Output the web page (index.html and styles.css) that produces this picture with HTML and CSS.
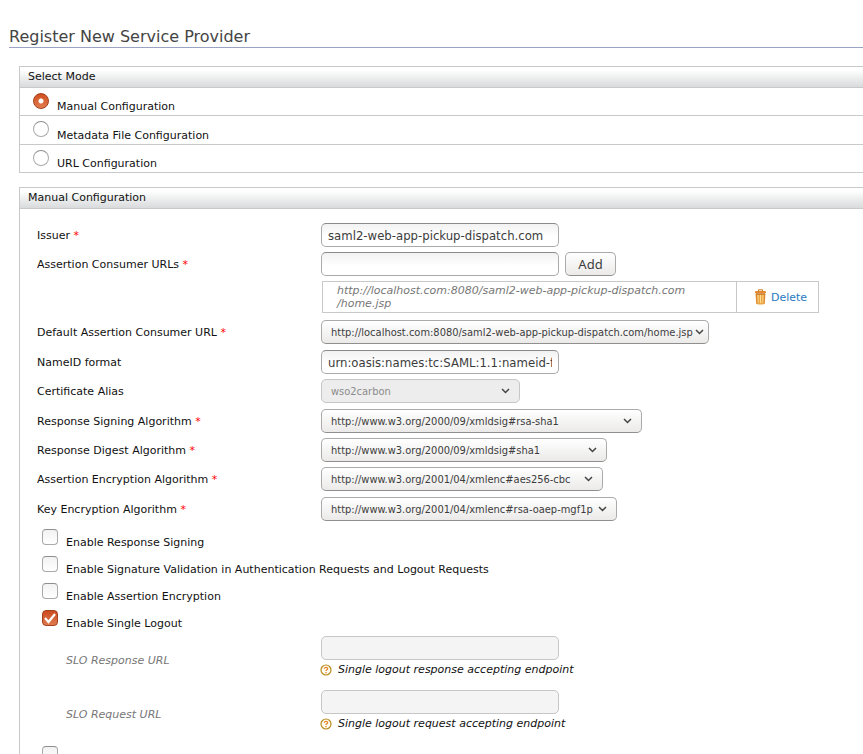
FILE: index.html
```
<!DOCTYPE html>
<html lang="en">
<head>
<meta charset="utf-8">
<title>Register New Service Provider</title>
<link rel="stylesheet" href="styles.css">
</head>
<body>
<main class="page">
  <h1 class="title">Register New Service Provider</h1>
  <form class="work-area">
    <section class="panel modes">
      <h2 class="panel-head">Select Mode</h2>
      <div class="mode"><input class="tick radio" type="radio" name="mode" id="manual" checked><label for="manual">Manual Configuration</label></div>
      <div class="mode"><input class="tick radio" type="radio" name="mode" id="metadata"><label for="metadata">Metadata File Configuration</label></div>
      <div class="mode"><input class="tick radio" type="radio" name="mode" id="url"><label for="url">URL Configuration</label></div>
    </section>

    <section class="panel">
      <h2 class="panel-head">Manual Configuration</h2>
      <div class="fields">
        <div class="row"><label class="name" for="issuer">Issuer <span class="req">*</span></label><input class="text" id="issuer" type="text" value="saml2-web-app-pickup-dispatch.com"></div>
        <div class="row"><label class="name" for="acs">Assertion Consumer URLs <span class="req">*</span></label><input class="text" id="acs" type="text"><button class="add" type="button">Add</button></div>
        <table class="urls">
          <tr>
            <td class="url">http://localhost.com:8080/saml2-web-app-pickup-dispatch.com<br>/home.jsp</td>
            <td class="action"><a class="delete" href="#"><svg class="bin" viewBox="0 0 12 16" aria-hidden="true"><path d="M4 2V.8h4V2" fill="none" stroke="#c9741f"/><path d="M1 5h10l-.8 10q-4.200 1.200-8.400 0z" fill="#eda644"/><path d="M3.500 6v8M6 6v8M8.500 6v8" stroke="#ffe09a"/><path d="M2 5.500l.5 9M10 5.500l-.5 9" stroke="#d9822b"/><rect x=".5" y="2" width="11" height="2.500" rx="1" fill="#e58a2c"/><path d="M1.500 5h9" stroke="#b9651c"/></svg>Delete</a></td>
          </tr>
        </table>
        <div class="row"><label class="name" for="dacs">Default Assertion Consumer URL <span class="req">*</span></label><select class="select w-acs" id="dacs"><option>http://localhost.com:8080/saml2-web-app-pickup-dispatch.com/home.jsp</option></select></div>
        <div class="row tall"><label class="name" for="nameid">NameID format</label><input class="text" id="nameid" type="text" value="urn:oasis:names:tc:SAML:1.1:nameid-format"></div>
        <div class="row"><label class="name" for="alias">Certificate Alias</label><select class="select w-alias" id="alias" disabled><option>wso2carbon</option></select></div>
        <div class="row tall"><label class="name" for="sign">Response Signing Algorithm <span class="req">*</span></label><select class="select w-sign" id="sign"><option>http://www.w3.org/2000/09/xmldsig#rsa-sha1</option></select></div>
        <div class="row"><label class="name" for="digest">Response Digest Algorithm <span class="req">*</span></label><select class="select w-digest" id="digest"><option>http://www.w3.org/2000/09/xmldsig#sha1</option></select></div>
        <div class="row"><label class="name" for="aenc">Assertion Encryption Algorithm <span class="req">*</span></label><select class="select w-aenc" id="aenc"><option>http://www.w3.org/2001/04/xmlenc#aes256-cbc</option></select></div>
        <div class="row tall"><label class="name" for="kenc">Key Encryption Algorithm <span class="req">*</span></label><select class="select w-kenc" id="kenc"><option>http://www.w3.org/2001/04/xmlenc#rsa-oaep-mgf1p</option></select></div>

        <div class="checks">
          <div class="check"><input class="tick box" type="checkbox" id="c1"><label for="c1">Enable Response Signing</label></div>
          <div class="check"><input class="tick box" type="checkbox" id="c2"><label for="c2">Enable Signature Validation in Authentication Requests and Logout Requests</label></div>
          <div class="check"><input class="tick box" type="checkbox" id="c3"><label for="c3">Enable Assertion Encryption</label></div>
          <div class="check"><input class="tick box" type="checkbox" id="c4" checked><label for="c4">Enable Single Logout</label></div>
        </div>

        <div class="slo">
          <label class="name sub" for="slores">SLO Response URL</label>
          <div><input class="text" id="slores" type="text" disabled>
            <p class="hint"><svg class="help" viewBox="0 0 12 12" aria-hidden="true"><circle cx="6" cy="6" r="5" fill="#fffdf2" stroke="#b98a1e" stroke-width="1.200"/><path d="M4.300 4.800q.1-1.500 1.700-1.500t1.700 1.300q0 .8-.9 1.200T6 7" fill="none" stroke="#e8862a" stroke-width="1.300"/><path d="M5.300 8h1.400v1.200H5.300z" fill="#e8862a"/></svg>Single logout response accepting endpoint</p></div>
        </div>
        <div class="slo">
          <label class="name sub" for="sloreq">SLO Request URL</label>
          <div><input class="text" id="sloreq" type="text" disabled>
            <p class="hint"><svg class="help" viewBox="0 0 12 12" aria-hidden="true"><circle cx="6" cy="6" r="5" fill="#fffdf2" stroke="#b98a1e" stroke-width="1.200"/><path d="M4.300 4.800q.1-1.500 1.700-1.500t1.700 1.300q0 .8-.9 1.200T6 7" fill="none" stroke="#e8862a" stroke-width="1.300"/><path d="M5.300 8h1.400v1.200H5.300z" fill="#e8862a"/></svg>Single logout request accepting endpoint</p></div>
        </div>
        <div class="check last"><input class="tick box" type="checkbox" aria-label="Next option"></div>
      </div>
    </section>
  </form>
</main>
</body>
</html>
```
FILE: styles.css
```
* { box-sizing: border-box; }
html { height: 100%; overflow: hidden; }
body {
  height: 100%;
  margin: 0;
  overflow: hidden;
  background: #fff;
  color: #111;
  font: 11px/13px "DejaVu Sans", sans-serif;
}
.page { padding: 27px 0 0 9px; }
.title {
  margin: 0;
  border-bottom: 1px solid #9ba3c4;
  color: #444;
  font-size: 16px;
  font-weight: 400;
  line-height: 20px;
}
.work-area { padding: 18px 0 0 10px; }
.panel {
  border: solid #c8c9ca;
  border-width: 1px 0 0 1px;
  margin-bottom: 14px;
}
.panel-head {
  height: 21px;
  margin: 0;
  padding: 3px 8px;
  border-bottom: 1px solid #c8c9ca;
  background: linear-gradient(#fff 15%, #eceeee 55%, #d9dadc);
  font-size: 11px;
  font-weight: 400;
  line-height: 13px;
}
.mode {
  display: flex;
  align-items: flex-end;
  gap: 8px;
  height: 28px;
  padding: 0 13px 2px;
  border-bottom: 1px solid #c8c9ca;
}
.mode .tick { align-self: flex-start; margin-top: 5px; }
.modes .mode:nth-of-type(2) { height: 29px; }

.tick {
  flex: none;
  width: 16px;
  height: 16px;
  margin: 0;
  appearance: none;
  border: 1px solid #aaa;
  border-top-color: #8e8e8e;
  background: linear-gradient(#f2f2f2, #fff);
}
.radio { border-radius: 50%; background: #fff; }
.box { border-radius: 4px; }
.tick:checked { border-color: #a5401c; }
.radio:checked { background: radial-gradient(circle, #fff 0 2px, transparent 3px), linear-gradient(#cf4f1f, #e27c50); }
.box:checked {
  background:
    url("data:image/svg+xml,%3Csvg xmlns='http://www.w3.org/2000/svg' viewBox='0 0 14 14'%3E%3Cpath d='M2 7l3.500 4L12 3' fill='none' stroke='white' stroke-width='2.200'/%3E%3C/svg%3E"),
    linear-gradient(#cb4c1f, #df7a50);
}

.fields { padding: 14px 17px 0; }
.row {
  display: flex;
  align-items: flex-end;
  height: 29px;
  margin: 0;
}
.row:first-child { height: 24px; }
.tall { height: 30px; }
.name { flex: none; width: 284px; }
.row .name { padding-bottom: 5px; }
.req { color: #f00; }
.text {
  display: block;
  width: 238px;
  height: 24px;
  padding: 0 6px;
  border: 1px solid #aaa;
  border-top-color: #8a8a8a;
  border-radius: 5px;
  background: linear-gradient(#f2f2f2, #fff 60%);
  color: #3c3c3c;
  font: 13px "DejaVu Sans Condensed", "Noto Sans", sans-serif;
}
.text:disabled { border-color: #c6c6c6; background: #f4f4f4; }
.add {
  width: 51px;
  height: 24px;
  margin-left: 6px;
  padding: 0;
  border: 1px solid #aaa;
  border-bottom-color: #8f8f8f;
  border-radius: 5px;
  background: linear-gradient(#fff, #ebeae9);
  color: #3c3c3c;
  font: 13px "Noto Sans", sans-serif;
}
.select {
  height: 24px;
  padding: 0 9px;
  appearance: none;
  border: 1px solid #aaa;
  border-bottom-color: #8f8f8f;
  border-radius: 5px;
  background:
    url("data:image/svg+xml,%3Csvg xmlns='http://www.w3.org/2000/svg' viewBox='0 0 9 6'%3E%3Cpath d='M1 1l3.500 3.500L8 1' fill='none' stroke='%23444' stroke-width='1.500'/%3E%3C/svg%3E") right 9px center / 9px 6px no-repeat,
    linear-gradient(#fff, #ebeae9);
  color: #3c3c3c;
  font: 11px "DejaVu Sans Condensed", "Noto Sans", sans-serif;
}
.select:disabled {
  border-color: #c6c6c6;
  background:
    url("data:image/svg+xml,%3Csvg xmlns='http://www.w3.org/2000/svg' viewBox='0 0 9 6'%3E%3Cpath d='M1 1l3.500 3.500L8 1' fill='none' stroke='%23444' stroke-width='1.500'/%3E%3C/svg%3E") right 9px center / 9px 6px no-repeat,
    #ededed;
  color: #8c8c8c;
  opacity: 1;
}
.w-acs { width: 388px; background-position: right 4px center, 0 0; }
.w-alias { width: 199px; }
.w-sign { width: 321px; }
.w-digest { width: 286px; }
.w-aenc { width: 282px; }
.w-kenc { width: 296px; }

.urls {
  width: 497px;
  margin: 5px 0 2px 285px;
  border-collapse: collapse;
}
.urls td { height: 31px; padding: 2px 14px; border: 1px solid #c8c9ca; }
.url { color: #777; font-style: italic; }
.urls .action { width: 82px; padding: 0 0 0 17px; }
.delete { display: flex; align-items: center; gap: 4px; color: #2a78bd; text-decoration: none; }
.bin { width: 13px; height: 16px; }

.checks { padding-top: 8px; }
.check {
  display: flex;
  align-items: flex-end;
  gap: 8px;
  height: 20px;
  margin: 0 0 7px 5px;
}
.check .tick { align-self: flex-start; }
.slo { display: flex; height: 54px; }
.checks + .slo { margin-top: -1px; }
.sub { padding: 18px 0 0 29px; color: #777; font-style: italic; }
.hint {
  display: flex;
  align-items: center;
  gap: 6px;
  margin: 3px 0 0 -1px;
  font-style: italic;
}
.help { width: 12px; height: 12px; }
.last { padding-top: 2px; }
```
